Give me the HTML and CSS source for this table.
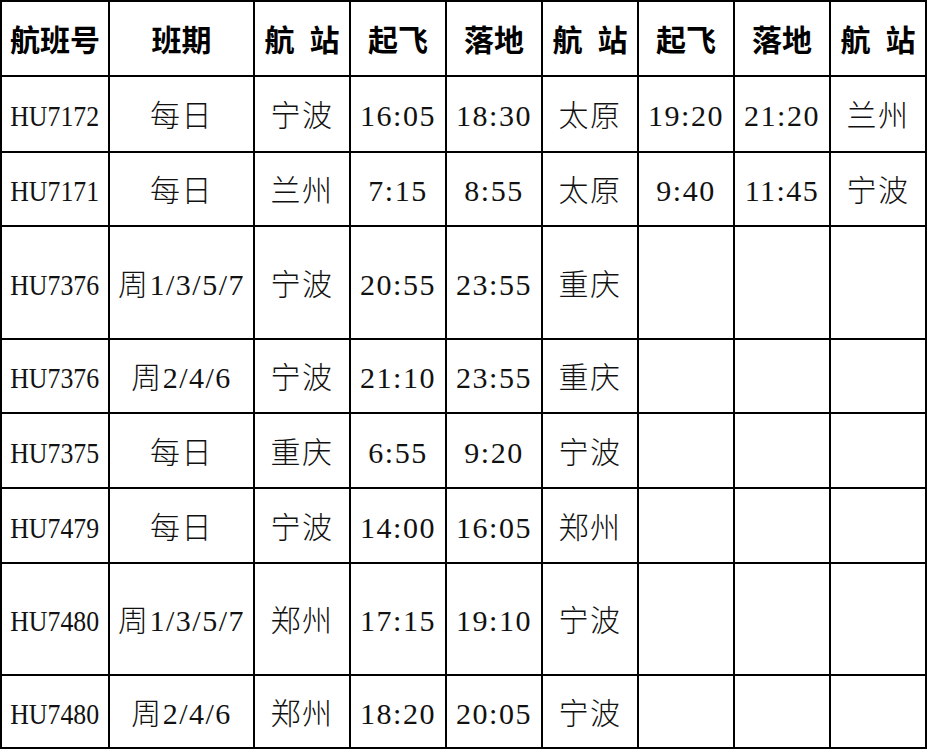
FILE: index.html
```html
<!DOCTYPE html>
<html lang="zh-CN">
<head>
<meta charset="utf-8">
<title>航班时刻表</title>
<link rel="stylesheet" href="styles.css">
</head>
<body>
<table class="schedule">
  <colgroup>
    <col class="c-flight">
    <col class="c-days">
    <col class="c-std"><col class="c-std"><col class="c-std">
    <col class="c-std"><col class="c-std"><col class="c-std"><col class="c-std">
  </colgroup>
  <thead>
    <tr class="h75">
      <th>航班号</th><th>班期</th><th>航&ensp;站</th><th>起飞</th><th>落地</th><th>航&ensp;站</th><th>起飞</th><th>落地</th><th>航&ensp;站</th>
    </tr>
  </thead>
  <tbody>
    <tr class="h76">
      <td><span class="fno">HU7172</span></td><td>每日</td><td>宁波</td><td>16:05</td><td>18:30</td><td>太原</td><td>19:20</td><td>21:20</td><td>兰州</td>
    </tr>
    <tr class="h74">
      <td><span class="fno">HU7171</span></td><td>每日</td><td>兰州</td><td>7:15</td><td>8:55</td><td>太原</td><td>9:40</td><td>11:45</td><td>宁波</td>
    </tr>
    <tr class="h113">
      <td><span class="fno">HU7376</span></td><td>周1/3/5/7</td><td>宁波</td><td>20:55</td><td>23:55</td><td>重庆</td><td></td><td></td><td></td>
    </tr>
    <tr class="h74">
      <td><span class="fno">HU7376</span></td><td>周2/4/6</td><td>宁波</td><td>21:10</td><td>23:55</td><td>重庆</td><td></td><td></td><td></td>
    </tr>
    <tr class="h75">
      <td><span class="fno">HU7375</span></td><td>每日</td><td>重庆</td><td>6:55</td><td>9:20</td><td>宁波</td><td></td><td></td><td></td>
    </tr>
    <tr class="h75">
      <td><span class="fno">HU7479</span></td><td>每日</td><td>宁波</td><td>14:00</td><td>16:05</td><td>郑州</td><td></td><td></td><td></td>
    </tr>
    <tr class="h112">
      <td><span class="fno">HU7480</span></td><td>周1/3/5/7</td><td>郑州</td><td>17:15</td><td>19:10</td><td>宁波</td><td></td><td></td><td></td>
    </tr>
    <tr class="h73">
      <td><span class="fno">HU7480</span></td><td>周2/4/6</td><td>郑州</td><td>18:20</td><td>20:05</td><td>宁波</td><td></td><td></td><td></td>
    </tr>
  </tbody>
</table>
</body>
</html>
```

FILE: styles.css
```css
html, body {
  margin: 0;
  padding: 0;
  background: #ffffff;
}

.schedule {
  table-layout: fixed;
  width: 927px;
  border-collapse: separate;
  border-spacing: 0;
  border-top: 2px solid #000;
  border-left: 2px solid #000;
  font-family: "Liberation Serif", "Noto Sans CJK SC", serif;
  font-size: 30px;
  color: #111;
}

.c-flight { width: 108px; }
.c-days { width: 145px; }
.c-std { width: 96px; }

.schedule th,
.schedule td {
  box-sizing: border-box;
  padding: 4px 0 0 0;
  border-right: 2px solid #000;
  border-bottom: 2px solid #000;
  text-align: center;
  vertical-align: middle;
  white-space: nowrap;
  line-height: 1.2;
}

.schedule th {
  font-weight: bold;
  color: #000;
}

.schedule td {
  font-weight: 300;
  letter-spacing: 1.5px;
}

.fno {
  display: inline-block;
  letter-spacing: 0;
  transform: scaleX(0.86);
}

.h73 { height: 73px; }
.h74 { height: 74px; }
.h75 { height: 75px; }
.h76 { height: 76px; }
.h112 { height: 112px; }
.h113 { height: 113px; }
```
